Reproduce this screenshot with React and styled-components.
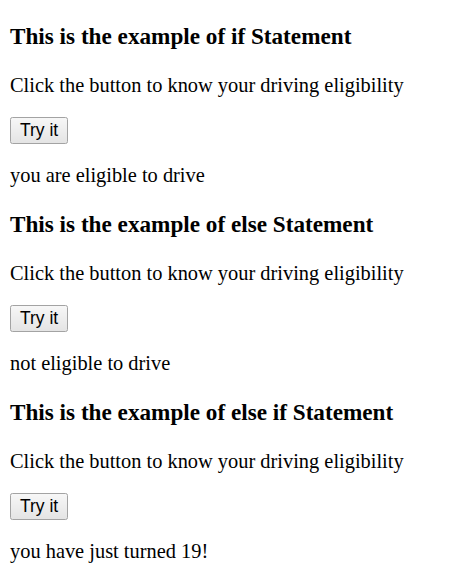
import React, { useState } from 'react'
import styled, { createGlobalStyle } from 'styled-components'

const GlobalStyle = createGlobalStyle`
  body {
    margin: 0;
    background: #fff;
    color: #000;
    font-family: 'Liberation Serif', 'Times New Roman', serif;
  }
`

const Page = styled.div`
  padding: 0 10px;
  font-size: 20.4px;
`

const Heading = styled.h3`
  font-size: 23.2px;
  font-weight: bold;
  margin: 24px 0;

  &:first-of-type {
    margin-top: 23px;
  }
`

const Text = styled.p`
  margin: 20px 0;
`

const ButtonRow = styled.div`
  display: flex;
  margin: 20px 0;
`

const TryButton = styled.button`
  font-family: 'Liberation Sans', Arial, sans-serif;
  font-size: 17.5px;
  color: #000;
  background: linear-gradient(#f7f7f7, #e4e4e4);
  border: 1px solid #a3a3a3;
  border-radius: 2.4px;
  padding: 0 9px;
  height: 27px;
`

const sections = [
  { keyword: 'if', result: 'you are eligible to drive' },
  { keyword: 'else', result: 'not eligible to drive' },
  { keyword: 'else if', result: 'you have just turned 19!' },
]

const Section = ({ keyword, result }) => {
  const [shown, setShown] = useState(result)

  return (
    <>
      <Heading>This is the example of {keyword} Statement</Heading>
      <Text>Click the button to know your driving eligibility</Text>
      <ButtonRow>
        <TryButton onClick={() => setShown(result)}>Try it</TryButton>
      </ButtonRow>
      <Text>{shown}</Text>
    </>
  )
}

const App = () => (
  <Page>
    <GlobalStyle />
    {sections.map(s => (
      <Section key={s.keyword} keyword={s.keyword} result={s.result} />
    ))}
  </Page>
)

export default App
